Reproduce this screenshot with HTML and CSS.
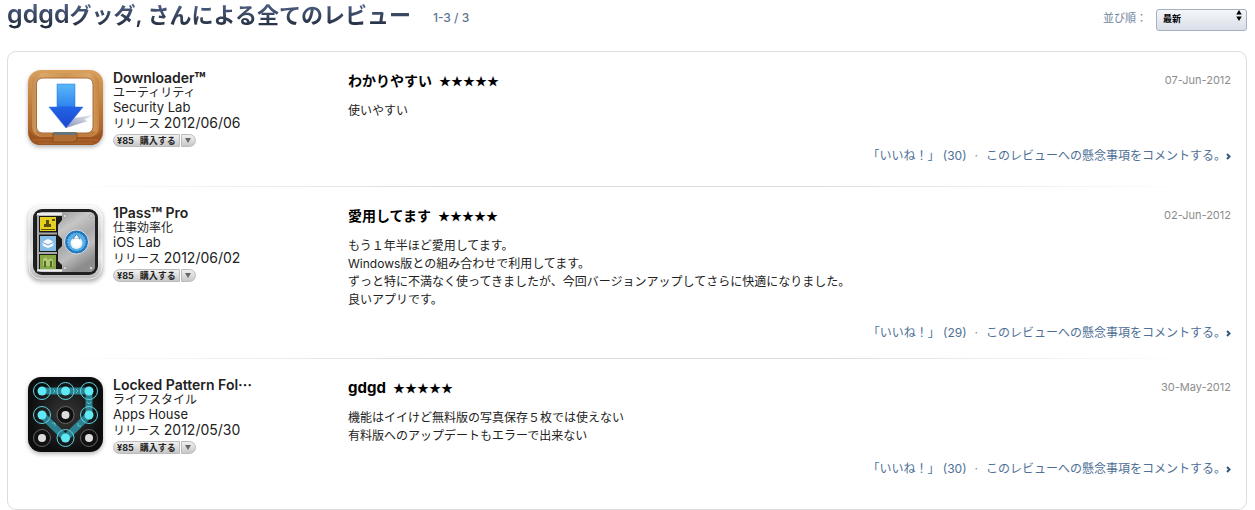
FILE: index.html
```html
<!DOCTYPE html>
<html lang="ja">

<head>
    <meta charset="UTF-8">
    <meta name="viewport" content="width=device-width, initial-scale=1.0">
    <title>レビュー</title>
    <link rel="stylesheet" href="styles.css">
</head>

<body>
    <header class="page-header">
        <h1><span class="latin">gdgd</span>グッダ, さんによる全てのレビュー</h1>
        <span class="count">1-3 / 3</span>
        <div class="sort">
            <label for="sort">並び順：</label>
            <div class="select-wrap">
                <select id="sort">
                    <option>最新</option>
                </select>
                <svg class="arrows" viewBox="0 0 6 12" aria-hidden="true">
                    <path d="M3 0L6 5H0zM3 12L0 7H6z" />
                </svg>
            </div>
        </div>
    </header>

    <main class="panel">
        <article class="row">
            <div class="app">
                <svg class="icon" viewBox="0 0 75 75" aria-hidden="true">
                    <defs>
                        <linearGradient id="wood" x1="0" y1="0" x2="0" y2="1">
                            <stop offset="0" stop-color="#d9a05c" />
                            <stop offset="0.6" stop-color="#b87435" />
                            <stop offset="1" stop-color="#a05a24" />
                        </linearGradient>
                        <linearGradient id="rim" x1="0" y1="0" x2="1" y2="0">
                            <stop offset="0" stop-color="#c58a50" />
                            <stop offset="0.15" stop-color="#dca768" />
                            <stop offset="0.5" stop-color="#cf9450" />
                            <stop offset="0.85" stop-color="#dca768" />
                            <stop offset="1" stop-color="#c48443" />
                        </linearGradient>
                        <linearGradient id="blue" x1="0" y1="0" x2="0" y2="1">
                            <stop offset="0" stop-color="#5ab9f8" />
                            <stop offset="0.5" stop-color="#2f86f0" />
                            <stop offset="0.52" stop-color="#2163e6" />
                            <stop offset="1" stop-color="#1c47d0" />
                        </linearGradient>
                        <linearGradient id="fade" x1="0" y1="1" x2="1" y2="0">
                            <stop offset="0" stop-color="#8c95b8" />
                            <stop offset="1" stop-color="#e6e8f0" />
                        </linearGradient>
                    </defs>
                    <rect width="75" height="75" rx="13" fill="url(#wood)" />
                    <path d="M1 60Q4 67 12 67H63Q71 67 74 60V63Q73 75 62 75H13Q1 75 1 63z" fill="#9c5421" />
                    <path d="M5 70H70M10 73H65" stroke="#b56c33" fill="none" />
                    <rect x="4" y="3" width="67" height="64" rx="10" fill="url(#rim)" />
                    <path d="M7 62Q10 67 16 67H60Q66 67 68 62L63 60H12z" fill="#bf7d42" />
                    <rect x="8.5" y="8" width="56.500" height="55" rx="6" fill="#fff" stroke="#a86b3b" />
                    <path d="M25 63H49V68Q49 72 45 72H25z" fill="#b06d34" stroke="#7d4617" stroke-width="0.7" />
                    <path d="M26 62H48V65H26z" fill="#68747c" />
                    <path d="M38 58L46 48L65 45L56 50L60 51z" fill="url(#fade)" />
                    <path d="M29 14H47V37H55L38 58L21 37H29z" fill="url(#blue)" stroke="#2b6bdd" stroke-width="0.5" />
                </svg>
                <div class="info">
                    <h2>Downloader<span class="tm">™</span></h2>
                    <p>ユーティリティ</p>
                    <p class="latin">Security Lab</p>
                    <p>リリース <span class="release">2012/06/06</span></p>
                    <div class="buy">
                        <button type="button" class="buy-main"><span>¥85</span><span>購入する</span></button>
                        <button type="button" class="buy-more" aria-label="その他"><svg viewBox="0 0 6 5"><path d="M0 0H6L3 5z" /></svg></button>
                    </div>
                </div>
            </div>
            <div class="review">
                <div class="review-head">
                    <h3>わかりやすい</h3>
                    <span class="stars">★★★★★</span>
                    <span class="date">07-Jun-2012</span>
                </div>
                <p class="text">使いやすい</p>
                <div class="links">
                    <a href="#">「いいね！」 (30)</a>
                    <span class="dot">·</span>
                    <a href="#">このレビューへの懸念事項をコメントする。<svg class="chevron" viewBox="0 0 5 7"><path d="M1 1L3.5 3.5L1 6" /></svg></a>
                </div>
            </div>
        </article>

        <article class="row">
            <div class="app">
                <svg class="icon" viewBox="0 0 75 75" aria-hidden="true">
                    <defs>
                        <linearGradient id="frame" x1="0" y1="0" x2="0" y2="1">
                            <stop offset="0" stop-color="#f6f6f6" />
                            <stop offset="0.4" stop-color="#d2d2d2" />
                            <stop offset="0.7" stop-color="#e6e6e6" />
                            <stop offset="1" stop-color="#b4b4b4" />
                        </linearGradient>
                        <linearGradient id="metal" x1="0" y1="0" x2="0.4" y2="1">
                            <stop offset="0" stop-color="#999" />
                            <stop offset="0.3" stop-color="#c6c6c6" />
                            <stop offset="0.55" stop-color="#aaa" />
                            <stop offset="0.75" stop-color="#bdbdbd" />
                            <stop offset="1" stop-color="#8d8d8d" />
                        </linearGradient>
                    </defs>
                    <rect width="75" height="75" rx="13" fill="url(#frame)" />
                    <rect x="1" y="1" width="73" height="73" rx="12" fill="none" stroke="#fff" opacity="0.7" />
                    <rect x="5" y="4" width="65" height="66" rx="9" fill="#1e2022" />
                    <rect x="8" y="7" width="59" height="60" rx="6" fill="#bbb" />
                    <path d="M8 11H36V64H8z" fill="#1a1a1a" />
                    <path d="M10 10V65M9 28.500H29M9 48H29" stroke="#a9a9a9" stroke-width="2" />
                    <path d="M9 9H34M9 65.500H34" stroke="#eee" stroke-width="2" />
                    <path d="M34 7H61Q67 7 67 13V61Q67 67 61 67H34V60L30 56V45L34 41V34L30 30V20L34 15z" fill="url(#metal)" />
                    <rect x="12" y="12" width="16" height="14" fill="#e7cf22" />
                    <path d="M18 15H21V19H23V22H16V19H18zM24 14H27V16H24zM13 24H27V25H13z" fill="#57500d" />
                    <rect x="12" y="31" width="16" height="15" fill="#86bce3" />
                    <path d="M14 37L20 34L26 37L25 41L20 43L15 41z" fill="#f2f8fd" />
                    <path d="M14 37L20 40L26 37" stroke="#68a2cd" fill="none" />
                    <rect x="12" y="50" width="16" height="14" fill="#87a944" />
                    <path d="M15 54L18 52L20 55L23 53L25 56V61H15z" fill="#b3c776" />
                    <path d="M17 56V62M23 56V62" stroke="#4c6c22" stroke-width="2" />
                    <g fill="#e5e5e5" stroke="#777" stroke-width="0.5">
                        <circle cx="37" cy="11" r="1.500" />
                        <circle cx="63" cy="11" r="1.500" />
                        <circle cx="37" cy="63" r="1.500" />
                        <circle cx="63" cy="63" r="1.500" />
                    </g>
                    <circle cx="48.500" cy="37" r="12" fill="#1f75bf" stroke="#ddd" />
                    <circle cx="48.500" cy="37" r="9" fill="#55b0e8" stroke="#8fcdf3" stroke-dasharray="1 2" />
                    <circle cx="48.500" cy="38" r="6" fill="#f3f5f7" />
                    <path d="M48.500 29L52 34H45z" fill="#eef4f8" stroke="#2b6e9f" stroke-width="0.7" />
                    <circle cx="48.500" cy="37.500" r="4" fill="#fff" />
                </svg>
                <div class="info">
                    <h2>1Pass<span class="tm">™</span> Pro</h2>
                    <p>仕事効率化</p>
                    <p class="latin">iOS Lab</p>
                    <p>リリース <span class="release">2012/06/02</span></p>
                    <div class="buy">
                        <button type="button" class="buy-main"><span>¥85</span><span>購入する</span></button>
                        <button type="button" class="buy-more" aria-label="その他"><svg viewBox="0 0 6 5"><path d="M0 0H6L3 5z" /></svg></button>
                    </div>
                </div>
            </div>
            <div class="review">
                <div class="review-head">
                    <h3>愛用してます</h3>
                    <span class="stars">★★★★★</span>
                    <span class="date">02-Jun-2012</span>
                </div>
                <p class="text">もう１年半ほど愛用してます。<br>Windows版との組み合わせで利用してます。<br>ずっと特に不満なく使ってきましたが、今回バージョンアップしてさらに快適になりました。<br>良いアプリです。</p>
                <div class="links">
                    <a href="#">「いいね！」 (29)</a>
                    <span class="dot">·</span>
                    <a href="#">このレビューへの懸念事項をコメントする。<svg class="chevron" viewBox="0 0 5 7"><path d="M1 1L3.5 3.5L1 6" /></svg></a>
                </div>
            </div>
        </article>

        <article class="row">
            <div class="app">
                <svg class="icon" viewBox="0 0 75 75" aria-hidden="true">
                    <defs>
                        <radialGradient id="dark">
                            <stop offset="0" stop-color="#383838" />
                            <stop offset="1" stop-color="#0c0d0e" />
                        </radialGradient>
                    </defs>
                    <rect width="75" height="75" rx="13" fill="url(#dark)" />
                    <path d="M14 14H61V38L37.5 61L14 38" fill="none" stroke="#2f93a4" stroke-width="7" stroke-linejoin="round" opacity="0.85" />
                    <g fill="none" stroke="#5fd3e0">
                        <circle cx="14" cy="14" r="8.5" />
                        <circle cx="37.5" cy="14" r="8.5" />
                        <circle cx="61" cy="14" r="8.5" />
                        <circle cx="14" cy="38" r="8.5" />
                        <circle cx="61" cy="38" r="8.5" />
                        <circle cx="37.5" cy="61" r="8.5" />
                    </g>
                    <g fill="#5ee9f5">
                        <circle cx="14" cy="14" r="4.5" />
                        <circle cx="37.5" cy="14" r="4.5" />
                        <circle cx="61" cy="14" r="4.5" />
                        <circle cx="14" cy="38" r="4.5" />
                        <circle cx="61" cy="38" r="4.5" />
                        <circle cx="37.5" cy="61" r="4.5" />
                    </g>
                    <g fill="#111" stroke="#777" stroke-width="0.8">
                        <circle cx="37.5" cy="38" r="8.5" />
                        <circle cx="14" cy="61" r="8.5" />
                        <circle cx="61" cy="61" r="8.5" />
                    </g>
                    <g fill="#ddd">
                        <circle cx="37.5" cy="38" r="4" />
                        <circle cx="14" cy="61" r="4" />
                        <circle cx="61" cy="61" r="4" />
                    </g>
                    <path d="M25 12L27 14L25 16M48 12L50 14L48 16M59 25L61 27L63 25M50 46V49H53M27 49V46H24" fill="none" stroke="#6bdbe5" stroke-width="0.7" />
                </svg>
                <div class="info">
                    <h2>Locked Pattern Fol⋯</h2>
                    <p>ライフスタイル</p>
                    <p class="latin">Apps House</p>
                    <p>リリース <span class="release">2012/05/30</span></p>
                    <div class="buy">
                        <button type="button" class="buy-main"><span>¥85</span><span>購入する</span></button>
                        <button type="button" class="buy-more" aria-label="その他"><svg viewBox="0 0 6 5"><path d="M0 0H6L3 5z" /></svg></button>
                    </div>
                </div>
            </div>
            <div class="review">
                <div class="review-head">
                    <h3><span class="latin">gdgd</span></h3>
                    <span class="stars">★★★★★</span>
                    <span class="date">30-May-2012</span>
                </div>
                <p class="text">機能はイイけど無料版の写真保存５枚では使えない<br>有料版へのアップデートもエラーで出来ない</p>
                <div class="links">
                    <a href="#">「いいね！」 (30)</a>
                    <span class="dot">·</span>
                    <a href="#">このレビューへの懸念事項をコメントする。<svg class="chevron" viewBox="0 0 5 7"><path d="M1 1L3.5 3.5L1 6" /></svg></a>
                </div>
            </div>
        </article>
    </main>
</body>

</html>
```
FILE: styles.css
```css
* {
    margin: 0;
    padding: 0;
    box-sizing: border-box;
}

body {
    font-family: Inter, "Noto Sans CJK JP", sans-serif;
    font-size: 12px;
    line-height: 18px;
    color: #222;
    background: #fff;
    padding: 0 8px 0 7px;
}

.page-header {
    display: flex;
    align-items: flex-start;
    height: 51px;
}

h1 {
    font-size: 22px;
    font-weight: 600;
    line-height: 28px;
    color: transparent;
    background: linear-gradient(#56698f, #1f2838);
    -webkit-background-clip: text;
    background-clip: text;
}

h1 .latin {
    font-size: 25px;
}

.count {
    margin-left: 22px;
    padding-top: 9px;
    font-weight: 500;
    color: #5b7594;
}

.sort {
    display: flex;
    align-items: center;
    gap: 9px;
    margin-left: auto;
    padding-top: 9px;
    font-size: 11px;
    color: #70859c;
}

.sort label {
    padding-bottom: 4px;
}

.select-wrap {
    position: relative;
}

select {
    display: block;
    appearance: none;
    width: 91px;
    height: 22px;
    padding: 0 6px 3px;
    font-family: inherit;
    font-size: 9px;
    font-weight: bold;
    color: #000;
    border: 1px solid #a5b1c2;
    border-radius: 3px;
    background: linear-gradient(#f4f6f9, #d9dfe8);
}

.arrows {
    position: absolute;
    top: 1px;
    right: 5px;
    width: 6px;
    height: 11px;
    pointer-events: none;
}

.panel {
    border: 1px solid #ddd;
    border-radius: 9px;
    padding-bottom: 15px;
}

.row {
    display: flex;
    padding: 18px 15px 16px 20px;
}

.row + .row {
    padding-top: 19px;
    background: linear-gradient(to right, transparent 4%, #ddd 35%, #ddd 65%, transparent 96%) top / 100% 1px no-repeat;
}

.app {
    display: flex;
    gap: 10px;
    width: 320px;
    flex-shrink: 0;
}

.icon {
    width: 75px;
    height: 75px;
    flex-shrink: 0;
    filter: drop-shadow(0 2px 2px rgba(0, 0, 0, 0.3));
}

.info {
    line-height: 15px;
}

.info p {
    height: 15px;
}

.info .latin {
    font-size: 13px;
}

.release {
    font-size: 14px;
}

h2 {
    font-size: 14px;
    font-weight: 600;
    line-height: 15px;
    height: 15px;
}

.tm {
    font-family: "Noto Sans CJK JP", sans-serif;
}

.buy {
    display: flex;
    gap: 1px;
    margin-top: 4px;
}

.buy button {
    height: 13px;
    border: 1px solid #bbb;
    background: linear-gradient(#f0f0f0, #c8c8c8);
    font-family: inherit;
    font-size: 9px;
    font-weight: bold;
    line-height: 11px;
    color: #222;
    cursor: pointer;
}

.buy .buy-main {
    display: flex;
    gap: 6px;
    padding: 0 3px;
    border-radius: 7px 0 0 7px;
}

.buy .buy-more {
    display: flex;
    align-items: center;
    justify-content: center;
    width: 15px;
    border-radius: 0 7px 7px 0;
}

.buy-more svg {
    width: 6px;
    height: 5px;
    fill: #666;
}

.review {
    flex: 1;
    min-height: 100px;
}

.review-head {
    display: flex;
    align-items: center;
    height: 22px;
    color: #000;
}

h3 {
    font-size: 14px;
    font-weight: bold;
}

h3 .latin {
    font-size: 15px;
}

.stars {
    margin-left: 7px;
    font-family: "Noto Sans CJK JP", sans-serif;
}

.date {
    margin-left: auto;
    padding-bottom: 3px;
    font-size: 11px;
    color: #8c8c8c;
}

.text {
    min-height: 30px;
    margin: 10px 0 15px;
}

.links {
    display: flex;
    justify-content: flex-end;
    gap: 8px;
}

.links a {
    color: #4e7096;
    text-decoration: none;
}

.dot {
    color: #888;
}

.chevron {
    width: 5px;
    height: 7px;
    fill: none;
    stroke: #35577d;
    stroke-width: 2;
}
```
